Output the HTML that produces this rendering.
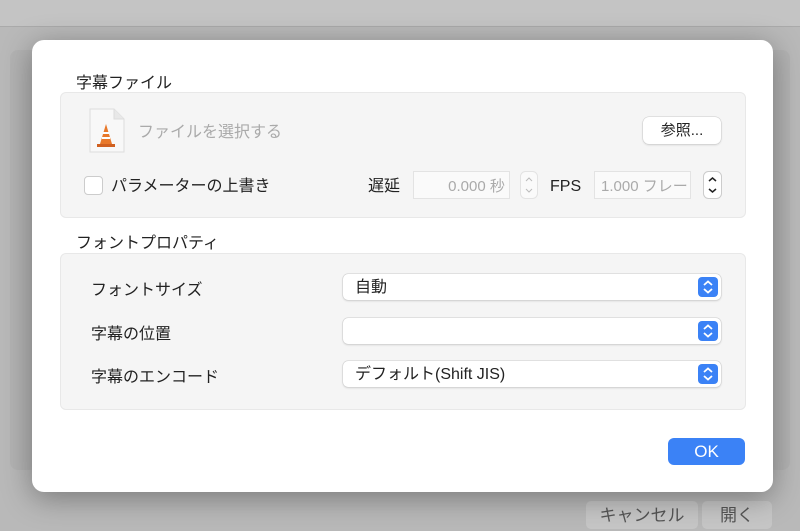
<html><head><style>
body{margin:0;width:800px;height:529px;overflow:hidden;background:#b9b9b9;font-family:"Liberation Sans","Noto Sans CJK JP",sans-serif;position:relative}
.a{position:absolute}
.dlg{left:32px;top:40px;width:741px;height:452px;background:#fff;border-radius:12px;box-shadow:0 6px 30px rgba(0,0,0,.35)}
.pan{background:#f5f5f5;border:1px solid #e8e8e8;border-radius:6px}
.t{font-size:16px;color:#222;line-height:20px}
.pop{left:343px;width:378px;height:26px;background:#fff;border-radius:5px;box-shadow:0 0 0 .5px #ccc,0 1px 2px rgba(0,0,0,.15);font-size:16px;color:#222;line-height:28px;text-indent:12px}
.pop i{position:absolute;right:3px;top:3px;width:20px;height:20px;background:#3b82f6;border-radius:4px}
.pop i svg{position:absolute;left:0;top:0}
.fld{background:#fafafa;border:1px solid #e3e3e3;height:26px;font-size:15px;color:#aaa;line-height:30px}
</style></head><body>
<div class="a" style="left:0;top:0;width:800px;height:26px;background:#c4c4c4;border-bottom:1px solid #aaa"></div>
<div class="a" style="left:10px;top:50px;width:780px;height:420px;background:#b3b3b3;border-radius:8px"></div>
<div class="a" style="left:586px;top:501px;width:112px;height:28px;background:#c6c6c6;border-radius:5px;font-size:17px;color:#555;text-align:center;line-height:30px">キャンセル</div>
<div class="a" style="left:702px;top:501px;width:70px;height:28px;background:#c6c6c6;border-radius:5px;font-size:17px;color:#555;text-align:center;line-height:30px">開く</div>
<div class="a dlg"></div>
<div class="a t" style="left:76px;top:74px">字幕ファイル</div>
<div class="a pan" style="left:60px;top:92px;width:684px;height:124px"></div>
<svg class="a" style="left:89px;top:108px" width="36" height="45"><path d="M1 1h24l10 10v33H1z" fill="#f8f8f8" stroke="#ddd"/><path d="M25 1v10h10" fill="#e8e8e8" stroke="#ddd"/><path d="M11 36l6-20 6 20z" fill="#e8782a"/><path d="M13 30h8M14 25h6" stroke="#fff" stroke-width="2"/><rect x="8" y="36" width="18" height="3" fill="#d06020"/></svg>
<div class="a t" style="left:138px;top:123px;color:#aaa">ファイルを選択する</div>
<div class="a" style="left:643px;top:117px;width:78px;height:27px;background:#fff;border-radius:6px;box-shadow:0 0 0 .5px #ccc,0 1px 2px rgba(0,0,0,.15);font-size:15px;text-align:center;line-height:28px;color:#222">参照...</div>
<div class="a" style="left:84px;top:176px;width:17px;height:17px;border:1px solid #ccc;border-radius:4px;background:#fff"></div>
<div class="a t" style="left:111px;top:177px">パラメーターの上書き</div>
<div class="a t" style="left:368px;top:177px">遅延</div>
<div class="a fld" style="left:413px;top:171px;width:95px;text-align:right">0.000 秒&nbsp;</div>
<svg class="a" style="left:520px;top:171px" width="18" height="28"><rect x=".5" y=".5" width="17" height="27" rx="5" fill="#fafafa" stroke="#e3e3e3"/><path d="M6 10l3-3 3 3M6 18l3 3 3-3" stroke="#bbb" fill="none"/></svg>
<div class="a t" style="left:550px;top:177px">FPS</div>
<div class="a fld" style="left:594px;top:171px;width:95px;text-indent:6px;overflow:hidden;white-space:nowrap">1.000 フレー</div>
<svg class="a" style="left:703px;top:171px" width="19" height="28"><rect x=".5" y=".5" width="18" height="27" rx="5" fill="#fff" stroke="#ccc"/><path d="M6 10l3.5-3 3.5 3M6 18l3.5 3 3.5-3" stroke="#222" stroke-width="1.5" fill="none"/></svg>
<div class="a t" style="left:76px;top:234px">フォントプロパティ</div>
<div class="a pan" style="left:60px;top:253px;width:684px;height:155px"></div>
<div class="a t" style="left:91px;top:281px">フォントサイズ</div>
<div class="a t" style="left:91px;top:325px">字幕の位置</div>
<div class="a t" style="left:91px;top:368px">字幕のエンコード</div>
<div class="a pop" style="top:274px">自動<i><svg width="20" height="20"><path d="M6 8l4-3.5 4 3.5M6 12l4 3.5 4-3.5" stroke="#fff" stroke-width="1.8" fill="none"/></svg></i></div>
<div class="a pop" style="top:318px"><i><svg width="20" height="20"><path d="M6 8l4-3.5 4 3.5M6 12l4 3.5 4-3.5" stroke="#fff" stroke-width="1.8" fill="none"/></svg></i></div>
<div class="a pop" style="top:361px">デフォルト(Shift JIS)<i><svg width="20" height="20"><path d="M6 8l4-3.5 4 3.5M6 12l4 3.5 4-3.5" stroke="#fff" stroke-width="1.8" fill="none"/></svg></i></div>
<div class="a" style="left:668px;top:438px;width:77px;height:27px;background:#3b82f6;border-radius:6px;color:#fff;font-size:17px;text-align:center;line-height:28px">OK</div>
</body></html>
